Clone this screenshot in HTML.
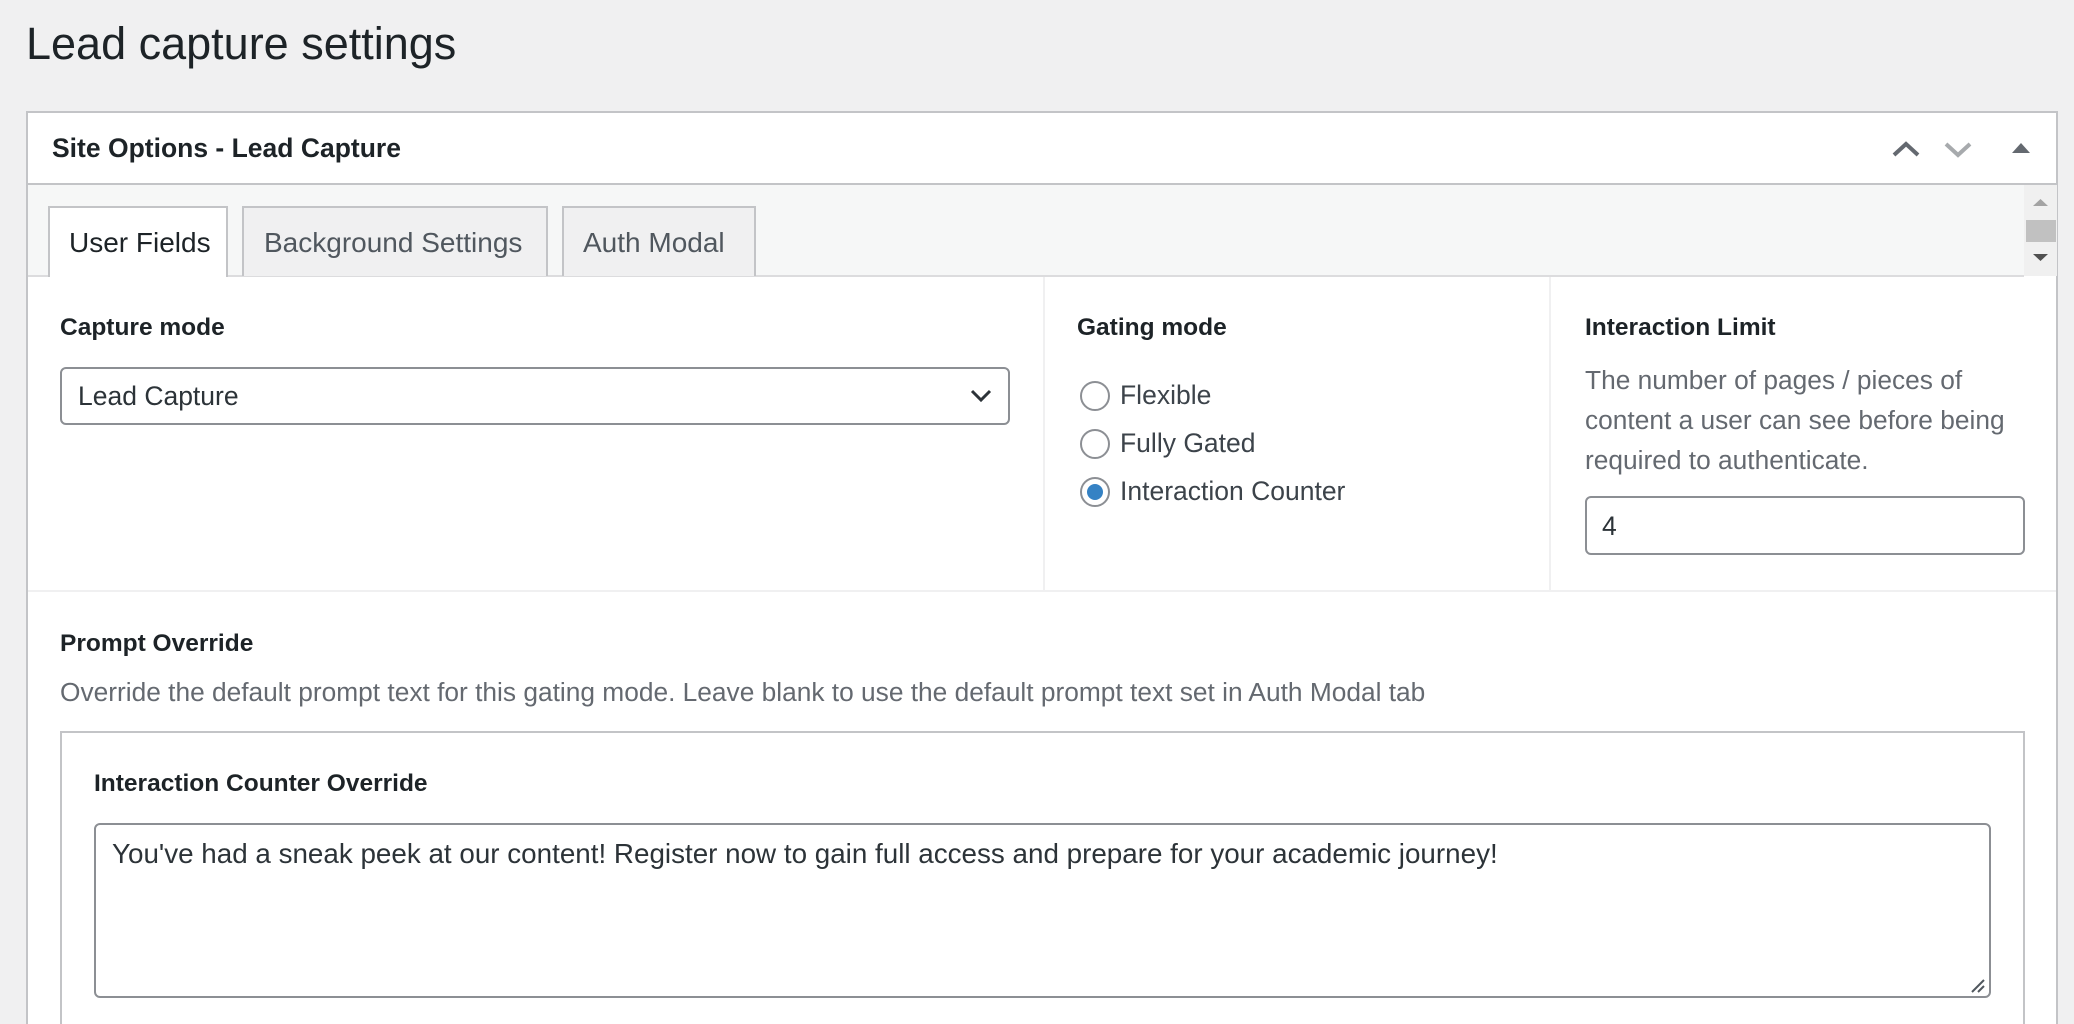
<!DOCTYPE html>
<html><head><meta charset="utf-8"><style>
*{box-sizing:border-box;margin:0;padding:0}
html,body{width:2074px;height:1024px;overflow:hidden}
body{background:#f0f0f1;font-family:"Liberation Sans",Arial,sans-serif;color:#3c434a;position:relative}
.a{position:absolute;white-space:nowrap}
.h{font-weight:bold;color:#1d2327;font-size:24.5px}
.t{font-size:26.5px}
.d{font-size:26.3px;color:#646970}
.radio{position:absolute;width:30px;height:30px;border:2px solid #8c8f94;border-radius:50%;background:#fff}
.radio.on::after{content:"";position:absolute;left:5px;top:5px;width:16px;height:16px;border-radius:50%;background:#3582c4}
</style></head><body>
<div class="a" style="left:26px;top:18px;font-size:45px;color:#1d2327">Lead capture settings</div>

<div class="a" style="left:26px;top:111px;width:2032px;height:930px;background:#fff;border:2px solid #c3c4c7"></div>
<div class="a" style="left:28px;top:183px;width:2028px;height:2px;background:#c3c4c7"></div>
<div class="a h" style="left:52px;top:133px;font-size:26.5px">Site Options - Lead Capture</div>
<svg class="a" style="left:1890px;top:136px" width="150" height="26" viewBox="0 0 150 26">
<path d="M4 19 L16 8 L28 19" stroke="#646970" stroke-width="4" fill="none"/>
<path d="M56 8 L68 19 L80 8" stroke="#a7aaad" stroke-width="4" fill="none"/>
<path d="M122 17 L131 7 L140 17 Z" fill="#646970"/>
</svg>

<div class="a" style="left:28px;top:185px;width:1996px;height:91px;background:#f6f7f7"></div>
<div class="a" style="left:28px;top:275px;width:1996px;height:2px;background:#dcdcde"></div>
<div class="a" style="left:48px;top:206px;width:180px;height:71px;background:#fff;border:2px solid #c3c4c7;border-bottom:none"></div>
<div class="a" style="left:69px;top:227px;color:#1d2327;font-size:28px">User Fields</div>
<div class="a" style="left:242px;top:206px;width:306px;height:70px;background:#f0f0f1;border:2px solid #c3c4c7;border-bottom:none"></div>
<div class="a" style="left:264px;top:227px;color:#50575e;font-size:28px">Background Settings</div>
<div class="a" style="left:562px;top:206px;width:194px;height:70px;background:#f0f0f1;border:2px solid #c3c4c7;border-bottom:none"></div>
<div class="a" style="left:583px;top:227px;color:#50575e;font-size:28px">Auth Modal</div>
<div class="a" style="left:2024px;top:185px;width:33px;height:91px;background:#f0f0f0"></div>
<svg class="a" style="left:2024px;top:185px" width="33" height="91">
<path d="M9 21 L16.5 14 L24 21 Z" fill="#a3a3a3"/>
<rect x="2" y="35" width="30" height="22" fill="#c1c1c1"/>
<path d="M9 69 L24 69 L16.5 76 Z" fill="#505050"/>
</svg>

<div class="a" style="left:1043px;top:277px;width:2px;height:314px;background:#f0f0f1"></div>
<div class="a" style="left:1549px;top:277px;width:2px;height:314px;background:#f0f0f1"></div>
<div class="a" style="left:28px;top:590px;width:2028px;height:2px;background:#f0f0f1"></div>

<div class="a h" style="left:60px;top:314px">Capture mode</div>
<div class="a" style="left:60px;top:367px;width:950px;height:58px;border:2px solid #8c8f94;border-radius:6px;background:#fff"></div>
<div class="a t" style="left:78px;top:381px;color:#2c3338">Lead Capture</div>
<svg class="a" style="left:970px;top:388px" width="22" height="16"><path d="M2 3 L11 12 L20 3" stroke="#2c3338" stroke-width="3" fill="none"/></svg>

<div class="a h" style="left:1077px;top:314px">Gating mode</div>
<div class="radio" style="left:1080px;top:381px"></div>
<div class="a t" style="left:1120px;top:380px">Flexible</div>
<div class="radio" style="left:1080px;top:429px"></div>
<div class="a t" style="left:1120px;top:428px">Fully Gated</div>
<div class="radio on" style="left:1080px;top:477px"></div>
<div class="a t" style="left:1120px;top:476px">Interaction Counter</div>

<div class="a h" style="left:1585px;top:314px">Interaction Limit</div>
<div class="a d" style="left:1585px;top:360px;line-height:40px;white-space:normal;width:440px">The number of pages / pieces of content a user can see before being required to authenticate.</div>
<div class="a" style="left:1585px;top:496px;width:440px;height:59px;border:2px solid #8c8f94;border-radius:6px;background:#fff"></div>
<div class="a t" style="left:1602px;top:511px;color:#2c3338">4</div>

<div class="a h" style="left:60px;top:630px">Prompt Override</div>
<div class="a d" style="left:60px;top:677px">Override the default prompt text for this gating mode. Leave blank to use the default prompt text set in Auth Modal tab</div>
<div class="a" style="left:60px;top:731px;width:1965px;height:320px;border:2px solid #c3c4c7;background:#fff"></div>
<div class="a h" style="left:94px;top:770px">Interaction Counter Override</div>
<div class="a" style="left:94px;top:823px;width:1897px;height:175px;border:2px solid #8c8f94;border-radius:6px;background:#fff"></div>
<div class="a" style="left:112px;top:838px;color:#2c3338;font-size:27.8px">You've had a sneak peek at our content! Register now to gain full access and prepare for your academic journey!</div>
<svg class="a" style="left:1970px;top:978px" width="16" height="16"><path d="M2 14 L14 2 M8 14 L14 8" stroke="#50575e" stroke-width="2"/></svg>
</body></html>
